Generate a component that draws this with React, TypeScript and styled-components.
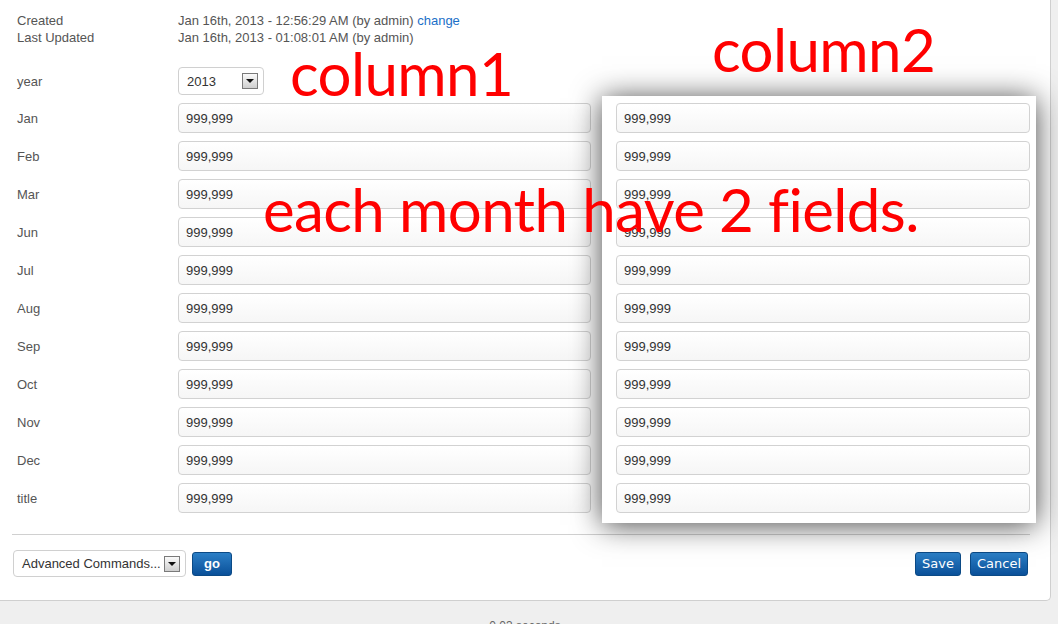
import styled, { createGlobalStyle } from "styled-components";

const GlobalStyle = createGlobalStyle`
	html, body {
		margin: 0;
		padding: 0;
		background: #efefef;
		font-family: "Liberation Sans", Arial, sans-serif;
		font-size: 13px;
		color: #555;
	}
`;

const Page = styled.div`
	width: 1058px;
	height: 624px;
	overflow: hidden;
`;

const Panel = styled.div`
	position: relative;
	box-sizing: border-box;
	width: 1051px;
	padding: 12px 0 23px 13px;
	background: #fff;
	border-right: 1px solid #cfcfcf;
	border-bottom: 1px solid #cfcfcf;
	border-bottom-right-radius: 5px;
`;

const Meta = styled.div`
	padding-left: 4px;
`;

const MetaRow = styled.div`
	display: flex;
	line-height: 17px;
`;

const Label = styled.div`
	width: 161px;
	flex-shrink: 0;
	color: #555;
`;

const Value = styled.div`
	color: #555;
`;

const Link = styled.a`
	color: #1b6fc8;
	text-decoration: none;
`;

const Form = styled.div`
	display: flex;
	align-items: flex-start;
	margin-top: 21px;
	padding-left: 4px;
`;

const LeftColumn = styled.div`
	display: flex;
	flex-direction: column;
	gap: 8px;
`;

const Row = styled.div<{ $height: number }>`
	display: flex;
	align-items: center;
	height: ${(p) => p.$height}px;
`;

const Field = styled.input`
	box-sizing: border-box;
	width: ${(p) => p.width ?? 413}px;
	height: 30px;
	margin: 0;
	padding: 0 7px;
	border: 1px solid #d2d2d2;
	border-radius: 4px;
	background: linear-gradient(to bottom, #ffffff, #f6f6f6);
	font-family: "Liberation Sans", Arial, sans-serif;
	font-size: 13px;
	color: #333;
	outline: none;
`;

const ColumnBox = styled.div`
	display: flex;
	flex-direction: column;
	gap: 8px;
	margin: 29px 0 0 11px;
	padding: 7px 6px 10px 14px;
	background: #fff;
	box-shadow: 0 2px 28px rgba(0, 0, 0, 0.72);
	position: relative;
	z-index: 1;
`;

const Select = styled.div<{ $width: number; $height: number }>`
	box-sizing: border-box;
	display: flex;
	align-items: center;
	justify-content: space-between;
	width: ${(p) => p.$width}px;
	height: ${(p) => p.$height}px;
	padding: 0 5px 0 8px;
	border: 1px solid #d0d0d0;
	border-radius: 4px;
	background: #fff;
	color: #333;
	font-size: 13px;
	white-space: nowrap;
`;

const DropButton = styled.span`
	position: relative;
	box-sizing: border-box;
	flex-shrink: 0;
	width: 16px;
	height: 16px;
	border: 1px solid #7a7a7a;
	background: linear-gradient(to bottom, #fafafa, #cfcfcf);

	&::after {
		content: "";
		position: absolute;
		left: 3px;
		top: 5px;
		border-left: 4px solid transparent;
		border-right: 4px solid transparent;
		border-top: 4px solid #111;
	}
`;

const Separator = styled.hr`
	margin: 11px 20px 0 -1px;
	border: none;
	border-top: 1px solid #d0d0d0;
	height: 0;
`;

const Actions = styled.div`
	display: flex;
	align-items: center;
	margin-top: 15px;
	padding-right: 22px;
	height: 27px;
`;

const ActionGroup = styled.div`
	display: flex;
	align-items: center;
	gap: 6px;

	&:last-child {
		margin-left: auto;
		gap: 9px;
	}
`;

const Button = styled.button<{ $bold?: boolean }>`
	height: 24px;
	padding: 0 ${(p) => (p.$bold ? 11 : 6)}px;
	border: 1px solid #0b4a86;
	border-radius: 3px;
	background: linear-gradient(to bottom, #2c7fc6, #0a5099);
	color: #fff;
	font-family: ${(p) =>
		p.$bold ? `"Liberation Sans", Arial, sans-serif` : `"DejaVu Sans", Verdana, sans-serif`};
	font-size: 13px;
	font-weight: ${(p) => (p.$bold ? 700 : 400)};
	cursor: pointer;
`;

const Footer = styled.div`
	width: 1050px;
	padding-top: 18px;
	text-align: center;
	color: #666;
	font-size: 12px;
`;

const Note = styled.div<{ $x: number; $y: number }>`
	position: absolute;
	left: ${(p) => p.$x}px;
	top: ${(p) => p.$y}px;
	z-index: 2;
	color: #ff0000;
	font-family: Lato, "Open Sans", sans-serif;
	font-size: 60px;
	letter-spacing: -0.6px;
	line-height: 1;
	white-space: nowrap;
	pointer-events: none;
`;

const months = ["Jan", "Feb", "Mar", "Jun", "Jul", "Aug", "Sep", "Oct", "Nov", "Dec", "title"];

export default function App() {
	return (
		<>
			<GlobalStyle />
			<Page>
				<Panel>
					<Meta>
						<MetaRow>
							<Label>Created</Label>
							<Value>
								Jan 16th, 2013 - 12:56:29 AM (by admin) <Link href="#">change</Link>
							</Value>
						</MetaRow>
						<MetaRow>
							<Label>Last Updated</Label>
							<Value>Jan 16th, 2013 - 01:08:01 AM (by admin)</Value>
						</MetaRow>
					</Meta>

					<Form>
						<LeftColumn>
							<Row $height={28}>
								<Label>year</Label>
								<Select $width={86} $height={28}>
									2013
									<DropButton />
								</Select>
							</Row>
							{months.map((m) => (
								<Row key={m} $height={30}>
									<Label>{m}</Label>
									<Field readOnly value="999,999" />
								</Row>
							))}
						</LeftColumn>

						<ColumnBox>
							{months.map((m) => (
								<Field key={m} readOnly value="999,999" width={414} />
							))}
						</ColumnBox>
					</Form>

					<Separator />

					<Actions>
						<ActionGroup>
							<Select $width={173} $height={27}>
								Advanced Commands...
								<DropButton />
							</Select>
							<Button $bold>go</Button>
						</ActionGroup>
						<ActionGroup>
							<Button>Save</Button>
							<Button>Cancel</Button>
						</ActionGroup>
					</Actions>

					<Note $x={290} $y={43}>column1</Note>
					<Note $x={712} $y={19}>column2</Note>
					<Note $x={263} $y={179}>each month have 2 fields.</Note>
				</Panel>
				<Footer>0.03 seconds</Footer>
			</Page>
		</>
	);
}
